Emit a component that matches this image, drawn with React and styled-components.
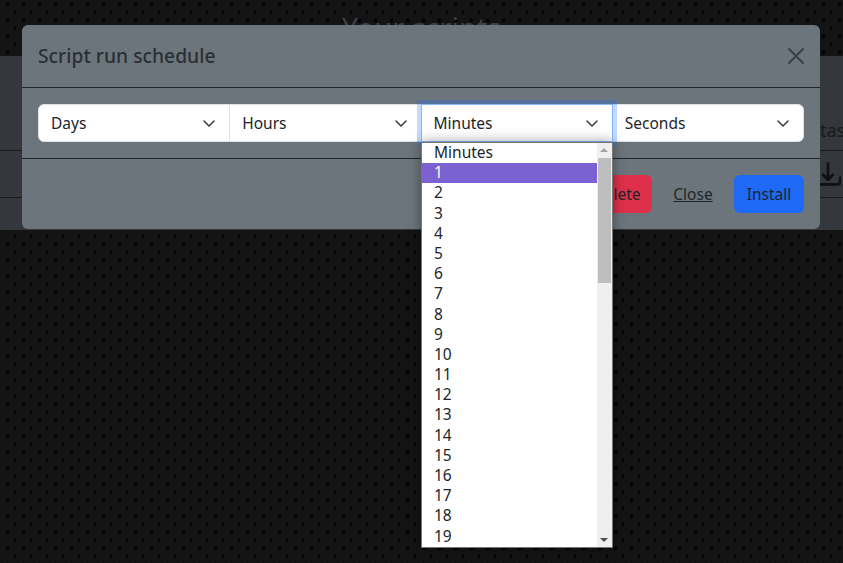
import React from 'react';
import styled, { createGlobalStyle } from 'styled-components';

const minutes = Array.from({ length: 19 }, (_, i) => i + 1);
const uiFont = '"Noto Sans", "Open Sans", sans-serif';

const GlobalStyle = createGlobalStyle`
  html, body { margin: 0; height: 100%; overflow: hidden; }
  body {
    font-family: ${uiFont};
    background-color: #141414;
    background-image:
      radial-gradient(circle at 15.5px 12.5px, #040404 1.5px, transparent 2.5px),
      radial-gradient(circle at 7.5px 4.5px, #040404 1.5px, transparent 2.5px);
    background-size: 16px 16px;
  }
`;

const Page = styled.div`
  position: relative;
  width: 843px;
  height: 563px;
  overflow: hidden;
`;

const PageTitle = styled.h1`
  margin: 0;
  height: 56px;
  padding-top: 8px;
  box-sizing: border-box;
  font-size: 29px;
  font-weight: 400;
  line-height: 40px;
  text-align: center;
  color: #3b4046;
`;

const Panel = styled.div`
  height: 174px;
  padding-top: 56px;
  box-sizing: border-box;
  background: #34383d;
`;

const PanelRow = styled.div`
  display: flex;
  align-items: center;
  height: ${p => p.$height}px;
  padding-left: ${p => p.$inset}px;
  padding-bottom: ${p => p.$lift || 0}px;
  box-sizing: border-box;
  border-bottom: 1px solid #1a1c1f;
  color: #16181a;
  font-size: 18px;
  white-space: nowrap;
  overflow: hidden;
`;

const Modal = styled.div`
  position: absolute;
  top: 25px;
  left: 22px;
  width: 798px;
  height: 204px;
  border-radius: 6px;
  background: #6d757c;
  color: #212529;
`;

const Header = styled.header`
  display: flex;
  align-items: center;
  justify-content: space-between;
  height: 63px;
  padding: 0 16px;
  box-sizing: border-box;
  border-bottom: 1px solid #212529;
`;

const Title = styled.h5`
  margin: 0;
  font-size: 19.3px;
  font-weight: 500;
  line-height: 24px;
  color: #2a2f34;
`;

const CloseIcon = styled.svg`
  width: 16px;
  height: 16px;
  color: #3a3f44;
`;

const Body = styled.div`
  height: 71px;
  padding: 16px;
  box-sizing: border-box;
  border-bottom: 1px solid #212529;
`;

const SelectGroup = styled.div`
  display: flex;
  height: 38px;
`;

const SelectBox = styled.div`
  position: relative;
  z-index: ${p => (p.$focused ? 2 : 1)};
  flex: 1;
  display: flex;
  align-items: center;
  justify-content: space-between;
  margin-left: ${p => (p.$first ? 0 : -1)}px;
  padding: 0 12px;
  box-sizing: border-box;
  background: #fff;
  border: 1px solid ${p => (p.$focused ? '#86b7fe' : '#dee2e6')};
  border-radius: ${p => (p.$first ? '6px 0 0 6px' : p.$last ? '0 6px 6px 0' : '0')};
  box-shadow: ${p => (p.$focused ? '0 0 0 4px rgba(13, 110, 253, 0.25)' : 'none')};
  font-size: 15.5px;
  color: #212529;
`;

const Chevron = styled.svg`
  width: 16px;
  height: 16px;
  fill: none;
  stroke: #343a40;
  stroke-width: 1.5;
  stroke-linecap: round;
  stroke-linejoin: round;
`;

const Footer = styled.footer`
  display: flex;
  align-items: center;
  justify-content: flex-end;
  height: 70px;
  padding: 0 16px;
  box-sizing: border-box;
`;

const Button = styled.button`
  width: ${p => p.$width}px;
  height: 38px;
  margin-left: ${p => p.$gap || 0}px;
  padding: 0;
  border: 0;
  border-radius: 6px;
  background: ${p => p.$bg || 'transparent'};
  color: #212529;
  font: 400 15.5px ${uiFont};
  text-decoration: ${p => (p.$link ? 'underline' : 'none')};
`;

const Dropdown = styled.div`
  position: absolute;
  top: 142px;
  left: 421px;
  z-index: 5;
  display: flex;
  width: 192px;
  height: 406px;
  box-sizing: border-box;
  border: 1px solid #767676;
  background: #fff;
  box-shadow: 0 0 12px rgba(0, 0, 0, 0.4);
  color: #212529;
  font-size: 15.5px;
`;

const OptionList = styled.div`
  flex: 1;
`;

const Option = styled.div`
  height: 20.2px;
  line-height: 18.4px;
  padding-left: 12px;
  background: ${p => (p.$selected ? '#7b61d1' : 'transparent')};
  color: ${p => (p.$selected ? '#fff' : '#212529')};
`;

const Scrollbar = styled.div`
  position: relative;
  flex: none;
  width: 15px;
  background: #efefef;
`;

const ScrollThumb = styled.div`
  position: absolute;
  top: 15px;
  left: 1px;
  width: 13px;
  height: 125px;
  background: #bebebe;
`;

const ScrollArrow = styled.div`
  position: absolute;
  left: 3px;
  ${p => (p.$down ? 'bottom: 5px;' : 'top: 5px;')}
  width: 0;
  height: 0;
  border-left: 4px solid transparent;
  border-right: 4px solid transparent;
  ${p => (p.$down ? 'border-top: 4px solid #505050;' : 'border-bottom: 4px solid #a3a3a3;')}
`;

const selects = ['Days', 'Hours', 'Minutes', 'Seconds'];

export default function App() {
  return (
    <Page>
      <GlobalStyle />
      <PageTitle>Your scripts</PageTitle>
      <Panel>
        <PanelRow $height={39} $inset={820} $lift={2}>tasks</PanelRow>
        <PanelRow $height={47} $inset={815}>
          <svg width="26" height="26" viewBox="0 0 16 16" fill="#0f1113" stroke="#0f1113" strokeWidth="0.7">
            <path d="M.5 9.9a.5.5 0 0 1 .5.5v2.5a1 1 0 0 0 1 1h12a1 1 0 0 0 1-1v-2.5a.5.5 0 0 1 1 0v2.5a2 2 0 0 1-2 2H2a2 2 0 0 1-2-2v-2.5a.5.5 0 0 1 .5-.5z" />
            <path d="M7.646 11.854a.5.5 0 0 0 .708 0l3-3a.5.5 0 0 0-.708-.708L8.5 10.293V1.5a.5.5 0 0 0-1 0v8.793L5.354 8.146a.5.5 0 1 0-.708.708l3 3z" />
          </svg>
        </PanelRow>
      </Panel>
      <Modal>
        <Header>
          <Title>Script run schedule</Title>
          <CloseIcon viewBox="0 0 16 16" fill="currentColor">
            <path d="M.293.293a1 1 0 0 1 1.414 0L8 6.586 14.293.293a1 1 0 1 1 1.414 1.414L9.414 8l6.293 6.293a1 1 0 0 1-1.414 1.414L8 9.414l-6.293 6.293a1 1 0 0 1-1.414-1.414L6.586 8 .293 1.707a1 1 0 0 1 0-1.414z" />
          </CloseIcon>
        </Header>
        <Body>
          <SelectGroup>
            {selects.map((s, i) => (
              <SelectBox key={s} $first={i === 0} $last={i === 3} $focused={s === 'Minutes'}>
                {s}
                <Chevron viewBox="0 0 16 16">
                  <path d="m3 6 5 5 5-5" />
                </Chevron>
              </SelectBox>
            ))}
          </SelectGroup>
        </Body>
        <Footer>
          <Button $bg="#df304b" $width={70}>Delete</Button>
          <Button $link $width={66} $gap={8}>Close</Button>
          <Button $bg="#1e69f5" $width={70} $gap={8}>Install</Button>
        </Footer>
      </Modal>
      <Dropdown>
        <OptionList>
          <Option>Minutes</Option>
          {minutes.map(n => (
            <Option key={n} $selected={n === 1}>{n}</Option>
          ))}
        </OptionList>
        <Scrollbar>
          <ScrollArrow />
          <ScrollThumb />
          <ScrollArrow $down />
        </Scrollbar>
      </Dropdown>
    </Page>
  );
}
